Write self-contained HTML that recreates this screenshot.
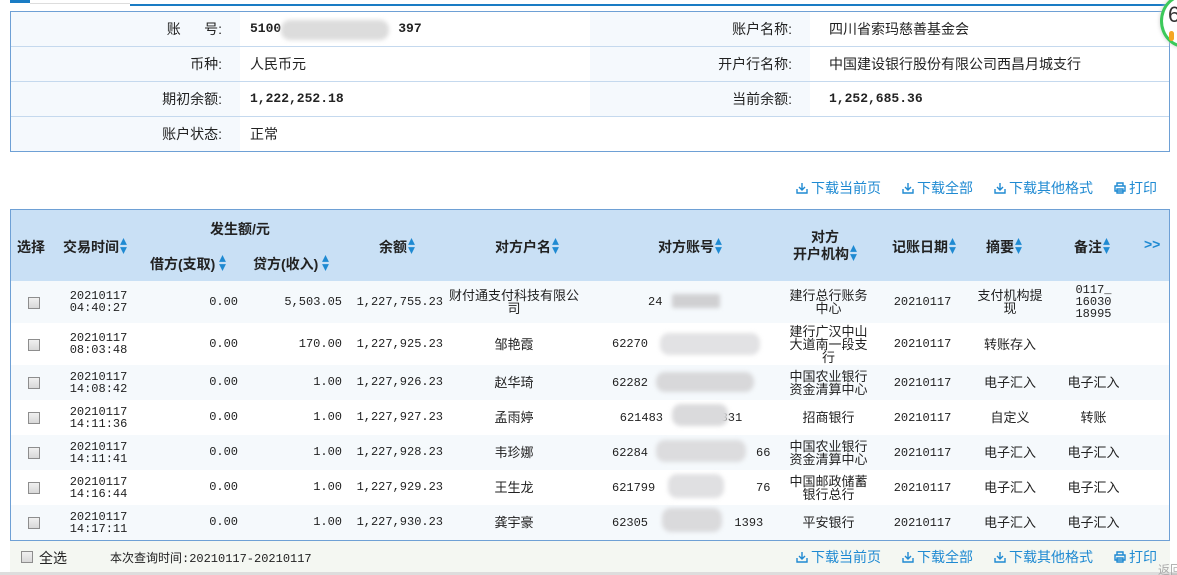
<!DOCTYPE html>
<html><head><meta charset="utf-8"><style>
*{margin:0;padding:0;box-sizing:border-box}
html{width:1177px;height:575px;overflow:hidden}
body{width:1177px;height:575px;background:#fff;position:relative;overflow:hidden;font-family:"Liberation Sans","Noto Sans CJK SC",sans-serif;font-size:14px;color:#222}
.a{position:absolute}
.mono{font-family:"Liberation Mono","Noto Sans CJK SC",monospace}
.info{left:10px;top:11px;width:1160px;height:141px;border:1px solid #6ea0d5}
.irow{position:absolute;left:0;width:1158px;height:35px;border-bottom:1px solid #c5d9ee}
.lab{position:absolute;top:0;height:34px;background:#f5f9fd;text-align:right;line-height:34px;padding-right:18px}
.val{position:absolute;top:0;line-height:34px}
.b{font-weight:bold;font-size:13px}
.link{color:#1f8ad2;font-size:14px;line-height:16px;white-space:nowrap}
.link svg{vertical-align:-1px;margin-right:3px}
.tbl{left:10px;top:209px;width:1160px;height:332px;border:1px solid #6ea0d5;border-bottom:none}
.hd{position:absolute;left:0;top:0;width:1158px;height:71px;background:#c9e0f5;font-weight:bold;font-size:14px}
.hd .a{white-space:nowrap}
.hd svg{vertical-align:-2px;margin-left:1px}
table{position:absolute;left:0;top:71px;border-collapse:collapse;table-layout:fixed;width:1158px;font-size:13px}
td{text-align:center;vertical-align:middle;padding:0;line-height:13px;overflow:hidden}
tr.t td{background:#f5f9fc}
td.n{font-family:"Liberation Mono",monospace;font-size:12px;text-align:right;padding-right:4px}
td.tm{font-family:"Liberation Mono",monospace;font-size:12px;line-height:12px}
.cb{display:inline-block;width:12px;height:12px;border:1px solid #8d8d8d;background:linear-gradient(#f0f0f0,#d8d8d8);vertical-align:middle}
.blur{position:absolute;background:#d6d6d8;border-radius:9px;filter:blur(2px)}
.foot{left:10px;top:540px;width:1160px;height:32px;background:#f4f7f2;border-top:1px solid #6ea0d5}
</style></head><body>
<div class="a" style="left:10px;top:0;width:20px;height:3px;background:#1a7cc4"></div>
<div class="a" style="left:130px;top:4px;width:1047px;height:2px;background:#1a7cc4"></div>
<div class="a" style="left:30px;top:3px;width:100px;height:1px;background:#ddd"></div>

<div class="a info">
 <div class="irow" style="top:0"><div class="lab" style="left:0;width:229px">账&nbsp;&nbsp;&nbsp;&nbsp;&nbsp;&nbsp;号:</div><div class="val b mono" style="left:239px">5100&nbsp;&nbsp;&nbsp;&nbsp;&nbsp;&nbsp;&nbsp;&nbsp;&nbsp;&nbsp;&nbsp;&nbsp;&nbsp;&nbsp;&nbsp;397</div><div class="blur" style="left:270px;top:8px;width:108px;height:20px;background:#dcdcdc"></div><div class="lab" style="left:579px;width:220px">账户名称:</div><div class="val" style="left:818px">四川省索玛慈善基金会</div></div>
 <div class="irow" style="top:35px"><div class="lab" style="left:0;width:229px">币种:</div><div class="val" style="left:239px">人民币元</div><div class="lab" style="left:579px;width:220px">开户行名称:</div><div class="val" style="left:818px">中国建设银行股份有限公司西昌月城支行</div></div>
 <div class="irow" style="top:70px"><div class="lab" style="left:0;width:229px">期初余额:</div><div class="val b mono" style="left:239px">1,222,252.18</div><div class="lab" style="left:579px;width:220px">当前余额:</div><div class="val b mono" style="left:818px">1,252,685.36</div></div>
 <div class="irow" style="top:105px;border:none"><div class="lab" style="left:0;width:229px">账户状态:</div><div class="val" style="left:239px">正常</div></div>
</div>

<svg width="0" height="0" style="position:absolute"><defs>
<symbol id="dl" viewBox="0 0 12 12"><path d="M6 1v7M3 5l3 3 3-3M1 7v4h10V7" fill="none" stroke="#1f8ad2" stroke-width="1.4"/></symbol>
<symbol id="pr" viewBox="0 0 12 12"><path d="M3 1h6v3H3zM1 4h10v5H1zM3 7h6v4H3z" fill="none" stroke="#1f8ad2" stroke-width="1.4"/></symbol>
<symbol id="so" viewBox="0 0 6 14"><path d="M3 0L6 6H0z M0 8h6l-3 6z" fill="#1f8ad2"/></symbol>
</defs></svg>

<div class="a link" style="left:796px;top:180px"><svg width="12" height="12"><use href="#dl"/></svg>下载当前页</div>
<div class="a link" style="left:902px;top:180px"><svg width="12" height="12"><use href="#dl"/></svg>下载全部</div>
<div class="a link" style="left:994px;top:180px"><svg width="12" height="12"><use href="#dl"/></svg>下载其他格式</div>
<div class="a link" style="left:1114px;top:180px"><svg width="12" height="12"><use href="#pr"/></svg>打印</div>

<div class="a tbl">
 <div class="hd">
  <div class="a" style="left:6px;top:27px">选择</div>
  <div class="a" style="left:52px;top:27px">交易时间<svg width="7" height="16"><use href="#so"/></svg></div>
  <div class="a" style="left:199px;top:9px">发生额/元</div>
  <div class="a" style="left:139px;top:44px">借方(支取)<svg width="7" height="16" style="margin-left:4px"><use href="#so"/></svg></div>
  <div class="a" style="left:242px;top:44px">贷方(收入)<svg width="7" height="16" style="margin-left:4px"><use href="#so"/></svg></div>
  <div class="a" style="left:368px;top:27px">余额<svg width="7" height="16"><use href="#so"/></svg></div>
  <div class="a" style="left:484px;top:27px">对方户名<svg width="7" height="16"><use href="#so"/></svg></div>
  <div class="a" style="left:647px;top:27px">对方账号<svg width="7" height="16"><use href="#so"/></svg></div>
  <div class="a" style="left:782px;top:20px;text-align:center;line-height:15px">对方<br>开户机构<svg width="7" height="16"><use href="#so"/></svg></div>
  <div class="a" style="left:881px;top:27px">记账日期<svg width="7" height="16"><use href="#so"/></svg></div>
  <div class="a" style="left:975px;top:27px">摘要<svg width="7" height="16"><use href="#so"/></svg></div>
  <div class="a" style="left:1063px;top:27px">备注<svg width="7" height="16"><use href="#so"/></svg></div>
  <div class="a" style="left:1133px;top:26px;color:#1f8ad2;font-size:14px">&gt;&gt;</div>
 </div>
 <table>
  <colgroup><col style="width:45px"><col style="width:85px"><col style="width:103px"><col style="width:102px"><col style="width:101px"><col style="width:134px"><col style="width:200px"><col style="width:95px"><col style="width:93px"><col style="width:82px"><col style="width:85px"><col style="width:33px"></colgroup>
  <tr class="t" style="height:42px"><td><span class="cb"></span></td><td class="tm">20210117<br>04:40:27</td><td class="n" style="padding-right:6px">0.00</td><td class="n">5,503.05</td><td class="n">1,227,755.23</td><td>财付通支付科技有限公司</td><td class="tm" style="text-align:left;padding-left:67px">24</td><td>建行总行账务<br>中心</td><td class="tm">20210117</td><td>支付机构提<br>现</td><td class="tm">0117_<br>16030<br>18995</td><td></td></tr>
  <tr style="height:42px"><td><span class="cb"></span></td><td class="tm">20210117<br>08:03:48</td><td class="n" style="padding-right:6px">0.00</td><td class="n">170.00</td><td class="n">1,227,925.23</td><td>邹艳霞</td><td class="tm" style="text-align:left;padding-left:31px">62270</td><td>建行广汉中山<br>大道南一段支<br>行</td><td class="tm">20210117</td><td>转账存入</td><td></td><td></td></tr>
  <tr class="t" style="height:35px"><td><span class="cb"></span></td><td class="tm">20210117<br>14:08:42</td><td class="n" style="padding-right:6px">0.00</td><td class="n">1.00</td><td class="n">1,227,926.23</td><td>赵华琦</td><td class="tm" style="text-align:left;padding-left:31px">62282</td><td>中国农业银行<br>资金清算中心</td><td class="tm">20210117</td><td>电子汇入</td><td>电子汇入</td><td></td></tr>
  <tr style="height:35px"><td><span class="cb"></span></td><td class="tm">20210117<br>14:11:36</td><td class="n" style="padding-right:6px">0.00</td><td class="n">1.00</td><td class="n">1,227,927.23</td><td>孟雨婷</td><td class="tm">621483&nbsp;&nbsp;&nbsp;&nbsp;&nbsp;&nbsp;&nbsp;&nbsp;331</td><td>招商银行</td><td class="tm">20210117</td><td>自定义</td><td>转账</td><td></td></tr>
  <tr class="t" style="height:35px"><td><span class="cb"></span></td><td class="tm">20210117<br>14:11:41</td><td class="n" style="padding-right:6px">0.00</td><td class="n">1.00</td><td class="n">1,227,928.23</td><td>韦珍娜</td><td class="tm" style="text-align:left;padding-left:31px">62284&nbsp;&nbsp;&nbsp;&nbsp;&nbsp;&nbsp;&nbsp;&nbsp;&nbsp;&nbsp;&nbsp;&nbsp;&nbsp;&nbsp;&nbsp;66</td><td>中国农业银行<br>资金清算中心</td><td class="tm">20210117</td><td>电子汇入</td><td>电子汇入</td><td></td></tr>
  <tr style="height:35px"><td><span class="cb"></span></td><td class="tm">20210117<br>14:16:44</td><td class="n" style="padding-right:6px">0.00</td><td class="n">1.00</td><td class="n">1,227,929.23</td><td>王生龙</td><td class="tm" style="text-align:left;padding-left:31px">621799&nbsp;&nbsp;&nbsp;&nbsp;&nbsp;&nbsp;&nbsp;&nbsp;&nbsp;&nbsp;&nbsp;&nbsp;&nbsp;&nbsp;76</td><td>中国邮政储蓄<br>银行总行</td><td class="tm">20210117</td><td>电子汇入</td><td>电子汇入</td><td></td></tr>
  <tr class="t" style="height:35px"><td><span class="cb"></span></td><td class="tm">20210117<br>14:17:11</td><td class="n" style="padding-right:6px">0.00</td><td class="n">1.00</td><td class="n">1,227,930.23</td><td>龚宇豪</td><td class="tm" style="text-align:left;padding-left:31px">62305&nbsp;&nbsp;&nbsp;&nbsp;&nbsp;&nbsp;&nbsp;&nbsp;&nbsp;&nbsp;&nbsp;&nbsp;1393</td><td>平安银行</td><td class="tm">20210117</td><td>电子汇入</td><td>电子汇入</td><td></td></tr>
 </table>
</div>
<div class="blur" style="left:672px;top:294px;width:48px;height:14px;background:#d0d0d2;border-radius:2px"></div>
<div class="blur" style="left:660px;top:333px;width:100px;height:22px;background:#e2e2e4"></div>
<div class="blur" style="left:656px;top:372px;width:98px;height:20px;background:#d8d8da"></div>
<div class="blur" style="left:672px;top:404px;width:56px;height:22px;background:#dadadc"></div>
<div class="blur" style="left:656px;top:440px;width:90px;height:22px;background:#dcdcde"></div>
<div class="blur" style="left:668px;top:474px;width:56px;height:24px;background:#e0e0e2"></div>
<div class="blur" style="left:662px;top:508px;width:60px;height:24px;background:#dadadc"></div>

<div class="a foot">
 <span class="cb a" style="left:11px;top:10px"></span>
 <div class="a" style="left:29px;top:7px">全选</div>
 <div class="a mono" style="left:100px;top:8px;font-size:12px">本次查询时间:20210117-20210117</div>
</div>
<div class="a link" style="left:796px;top:549px"><svg width="12" height="12"><use href="#dl"/></svg>下载当前页</div>
<div class="a link" style="left:902px;top:549px"><svg width="12" height="12"><use href="#dl"/></svg>下载全部</div>
<div class="a link" style="left:994px;top:549px"><svg width="12" height="12"><use href="#dl"/></svg>下载其他格式</div>
<div class="a link" style="left:1114px;top:549px"><svg width="12" height="12"><use href="#pr"/></svg>打印</div>
<div class="a" style="left:0;top:572px;width:1177px;height:3px;background:#ddd"></div>
<div class="a" style="left:1158px;top:561px;font-size:12px;color:#aaa;white-space:nowrap">返回</div>

<div class="a" style="left:1160px;top:-6px;width:50px;height:54px;border-radius:50%;border:3px solid #3cc95a;background:#fff;box-shadow:0 0 4px #ccc"></div>
<div class="a" style="left:1168px;top:2px;font-size:22px;color:#333">6</div>
<div class="a" style="left:1169px;top:31px;width:5px;height:10px;border-radius:3px;background:#f5a623"></div>
</body></html>
